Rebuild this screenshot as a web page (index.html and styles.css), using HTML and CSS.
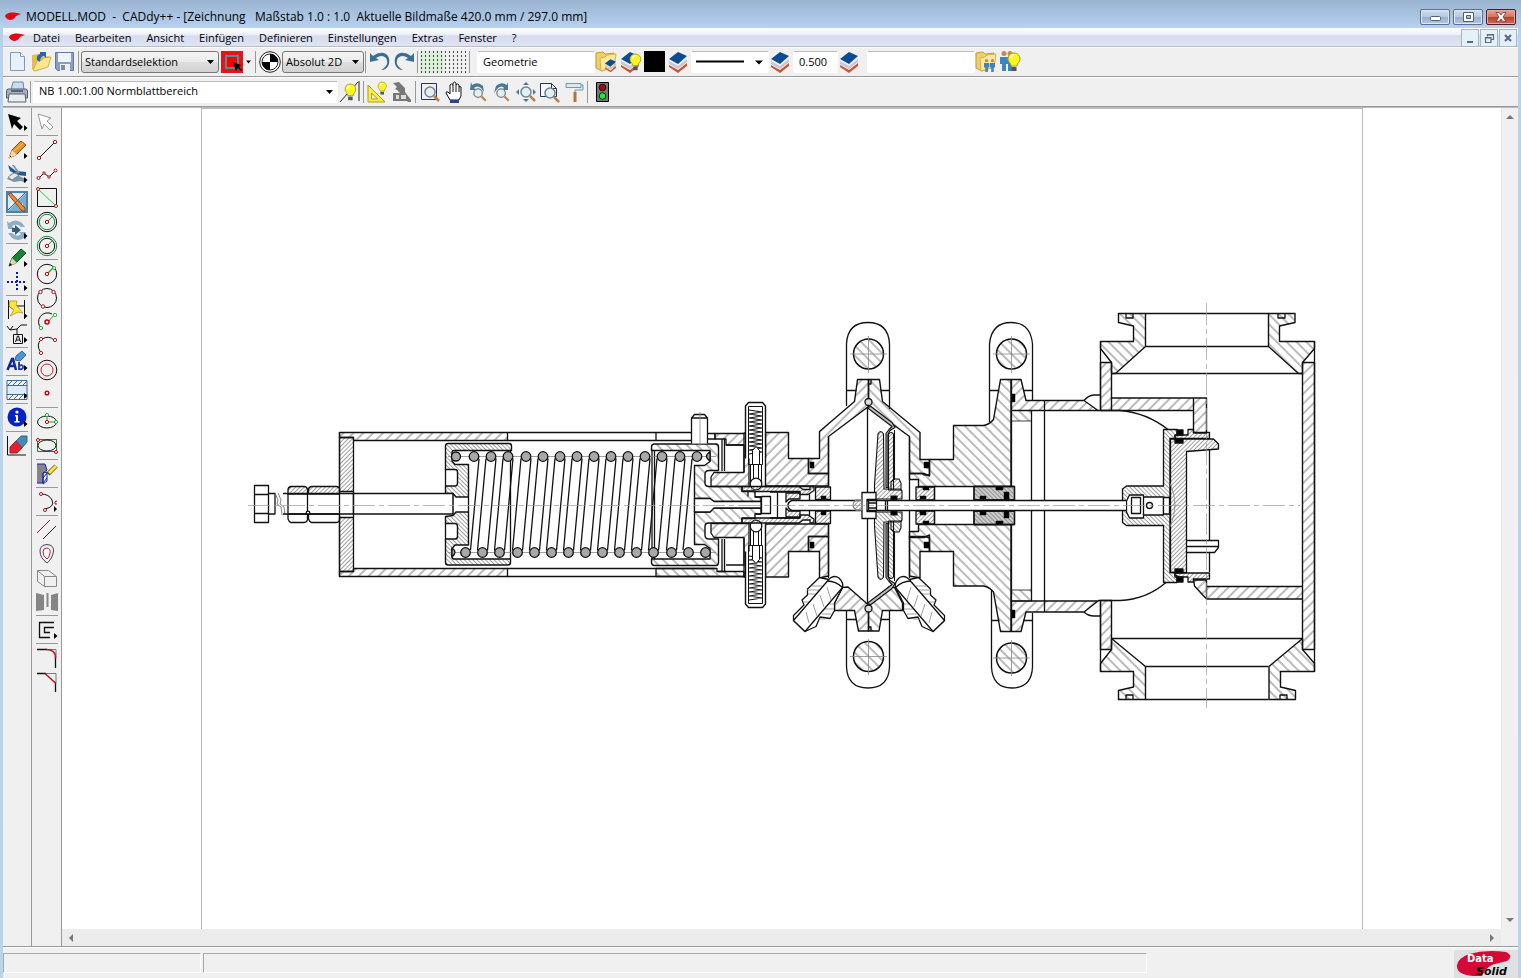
FILE: index.html
```html
<!DOCTYPE html>
<html lang="de">
<head>
<meta charset="utf-8">
<title>MODELL.MOD - CADdy++</title>
<link rel="stylesheet" href="styles.css">
</head>
<body>
<svg class="defs" aria-hidden="true">
  <defs>
    <path id="swoosh" d="M0 4Q1 1 6 0.500Q11 0 16 2Q13 3 11 4Q9 8 5 8Q1 7 0 4Z" fill="#e30613"/>
    <g id="layers"><path d="M3 15l9 5 9-7v3l-9 7-9-6z" fill="#cf5432"/><path d="M3 11l9 5 9-7v3l-9 7-9-5z" fill="#c3c9da"/><path d="M3 9l9-7 9 4-9 8z" fill="#0c4c92"/></g>
    <g id="bulb"><path d="M6 0C2 0 0 3 0 6c0 3 3 4 3 7h6c0-3 3-4 3-7 0-3-2-6-6-6z" fill="#fdf51e" stroke="#a59a24"/><path d="M3.500 14h5v4h-5z" fill="#555"/><path d="M3 5q1-3 3-3" fill="none" stroke="#fff" stroke-width="1.500"/></g>
    <g id="folder"><path d="M1 3l7-1 2 2 9-1v14l-12 4-6-3z" fill="#f0cf63" stroke="#c79a3d"/><path d="M5 8l5-1 2-2 9-1-2 13-13 4z" fill="#fbeaa0" stroke="#d8b14d"/></g>
    <g id="lens"><circle cx="6" cy="6" r="5" fill="#e4eef5" stroke="#738391" stroke-width="1.500"/><path d="M10 10l5 5" stroke="#b9814b" stroke-width="2.500"/></g>
    <g id="people"><circle cx="4" cy="2.500" r="2.500" fill="#c58a4a"/><path d="M0 6h8v7h-2v7h-4v-7h-2z" fill="#3a86bd"/></g>
    <path id="more" d="M19 15l3.500 3-3.500 3z" fill="#000"/>
    <path id="caret" d="M0 0h7l-3.500 4z" fill="#000"/>
  </defs>
</svg>
<div class="window">
  <header class="titlebar">
    <svg class="mark" viewBox="0 0 16 9"><use href="#swoosh"/></svg>
    <h1 class="caption">MODELL.MOD&nbsp; -&nbsp; CADdy++ - [Zeichnung&nbsp;&nbsp; Maßstab 1.0 : 1.0&nbsp; Aktuelle Bildmaße 420.0 mm / 297.0 mm]</h1>
    <div class="winbtns">
      <button class="winbtn" aria-label="Minimieren"><svg viewBox="0 0 28 14"><rect x="9.500" y="6.500" width="10" height="4" rx="1" fill="#fff" stroke="#55606e"/></svg></button>
      <button class="winbtn" aria-label="Maximieren"><svg viewBox="0 0 28 14"><path d="M9.500 2.500h10v9h-10zM12.500 5.500v3h4v-3z" fill="#fff" fill-rule="evenodd" stroke="#55606e"/></svg></button>
      <button class="winbtn close" aria-label="Schließen"><svg viewBox="0 0 28 14"><path d="M9 2.500h3l2 2.500 2-2.500h3l-3 4.500 3 4.500h-3l-2-2.500-2 2.500H9L12 7z" fill="#fff" stroke="#6d3536" stroke-width=".8"/></svg></button>
    </div>
  </header>
  <nav class="menubar">
    <svg class="mark" viewBox="0 0 16 9"><use href="#swoosh"/></svg>
    <button class="menu">Datei</button><button class="menu">Bearbeiten</button><button class="menu">Ansicht</button><button class="menu">Einfügen</button><button class="menu">Definieren</button><button class="menu">Einstellungen</button><button class="menu">Extras</button><button class="menu">Fenster</button><button class="menu">?</button>
    <div class="mdibtns">
      <button class="mdi" aria-label="Dokument minimieren"><svg viewBox="0 0 16 16"><path d="M5 12h6" stroke="#566b80" stroke-width="2"/></svg></button>
      <button class="mdi" aria-label="Dokument wiederherstellen"><svg viewBox="0 0 16 16"><path d="M6.500 6.500V4.500h6v5h-2.500M6.500 5h6M4.500 7.500H10v5H4.500zM4.500 8H10" fill="none" stroke="#566b80" stroke-width="1.200"/></svg></button>
      <button class="mdi" aria-label="Dokument schließen"><svg viewBox="0 0 16 16"><path d="M5 5l6 6M11 5l-6 6" stroke="#566b80" stroke-width="2.200"/></svg></button>
    </div>
  </nav>

  <div class="toolbar" role="toolbar" aria-label="Standard">
    <button class="tool" aria-label="Neu"><svg viewBox="0 0 24 24"><path d="M5.500 2.500h10l4 4v14h-14z" fill="#e7f1fc" stroke="#7d99c4"/><path d="M15.500 2.500v4h4" fill="#fff" stroke="#7d99c4"/></svg></button>
    <button class="tool" aria-label="Öffnen"><svg viewBox="0 0 24 24"><path d="M3 5l7-1 2 3 8-1v9l-12 6-5-2z" fill="#e9bd4a"/><path d="M4 20l4-9 5-1 1-2 8-1-3 10-13 4z" fill="#fce78e" stroke="#d7ae45"/><path d="M8 10Q7 5 11 4V2h6v6l-2-2q-4 0-4 6z" fill="#2f62ae"/></svg></button>
    <button class="tool" aria-label="Speichern"><svg viewBox="0 0 24 24"><path d="M2.500 2.500h18v18h-16l-2-2z" fill="#8b9dc3" stroke="#6078a8"/><path d="M5 3h13v9H5z" fill="#edf4fb"/><path d="M7 14h10v7H7z" fill="#eaf0f5"/><path d="M8 15h4v5H8z" fill="#7e8da8"/></svg></button>
    <span class="sep"></span>
    <span class="combo wide"><select class="field raised" aria-label="Selektion"><option>Standardselektion</option></select><svg class="caret" viewBox="0 0 7 4"><use href="#caret"/></svg></span>
    <button class="tool lead" aria-label="Auswahlfarbe"><svg viewBox="0 0 24 24"><path d="M1 1h22v22H1z" fill="#e5141a"/><path d="M6 6h12v12H6z" fill="#f00" stroke="#5b8a8d" stroke-width="2"/><path d="M13 12l8 3-2 2 3 3-1 1-3-3-2 3z" fill="#000"/></svg></button>
    <button class="drop" aria-label="Auswahlfarbe wählen"><svg viewBox="0 0 5 3"><path d="M0 0h5l-2.500 3z"/></svg></button>
    <span class="sep"></span>
    <button class="tool" aria-label="Koordinatensystem"><svg viewBox="0 0 24 24"><circle cx="12" cy="12" r="10.300" fill="#fff" stroke="#222"/><circle cx="12" cy="12" r="8" fill="#fff" stroke="#222"/><path d="M12 12V4a8 8 0 0 1 8 8zM12 12v8a8 8 0 0 1-8-8z"/></svg></button>
    <span class="combo coord"><select class="field raised" aria-label="Koordinaten"><option>Absolut 2D</option></select><svg class="caret" viewBox="0 0 7 4"><use href="#caret"/></svg></span>
    <span class="sep"></span>
    <button class="tool" aria-label="Rückgängig"><svg viewBox="0 0 24 24"><path d="M2 3v9l9-2-3-2q6-4 10 0 3 5-1 9-2 2-4 3 6 0 8-6 2-8-5-11-6-1-11 3z" fill="#3c6f96"/></svg></button>
    <button class="tool" aria-label="Wiederholen"><svg viewBox="0 0 24 24"><path d="M22 3v9l-9-2 3-2q-6-4-10 0-3 5 1 9 2 2 4 3-6 0-8-6-2-8 5-11 6-1 11 3z" fill="#3c6f96"/></svg></button>
    <span class="sep"></span>
    <button class="tool" aria-label="Raster grün"><svg viewBox="0 0 24 24"><path d="M0 1h24v22H0z" fill="#dcefd8"/><path d="M1 2h23M1 6h23M1 10h23M1 14h23M1 18h23M1 22h23" stroke="#111" stroke-dasharray="1 3" stroke-width="1.500"/></svg></button>
    <button class="tool" aria-label="Raster"><svg viewBox="0 0 24 24"><path d="M1 2h23M1 6h23M1 10h23M1 14h23M1 18h23M1 22h23" stroke="#111" stroke-dasharray="1 3" stroke-width="1.500"/></svg></button>
    <span class="sep"></span>
    <input class="field group" aria-label="Gruppe" value="Geometrie">
    <button class="tool" aria-label="Ebenen öffnen"><svg viewBox="0 0 24 24"><use href="#folder"/><g transform="translate(8 8) scale(.62)"><use href="#layers"/></g></svg></button>
    <button class="tool" aria-label="Ebenen sichtbar"><svg viewBox="0 0 24 24"><use href="#layers" x="-1"/><g transform="translate(11 4) scale(.9)"><use href="#bulb"/></g></svg></button>
    <button class="tool" aria-label="Farbe"><svg viewBox="0 0 24 24"><path d="M1 1h21v21H1z"/></svg></button>
    <button class="tool" aria-label="Farbe aus Ebene"><svg viewBox="0 0 24 24"><use href="#layers" x="-1"/></svg></button>
    <span class="combo linetype"><select class="field" aria-label="Linienart"><option></option></select><svg class="stroke" viewBox="0 0 78 21"><path d="M5 9.500h48" stroke="#000" stroke-width="2"/><path d="M64 8.500h8l-4 4z"/></svg></span>
    <button class="tool" aria-label="Linienart aus Ebene"><svg viewBox="0 0 24 24"><use href="#layers" x="-1"/></svg></button>
    <input class="field pen" aria-label="Strichstärke" value="0.500">
    <button class="tool" aria-label="Strichstärke aus Ebene"><svg viewBox="0 0 24 24"><use href="#layers" x="-1"/></svg></button>
    <input class="field klass" aria-label="Klasse" value="">
    <button class="tool" aria-label="Klasse öffnen"><svg viewBox="0 0 24 24"><use href="#folder"/><g transform="translate(9 9) scale(.65)"><use href="#people"/><use href="#people" x="9"/></g></svg></button>
    <button class="tool" aria-label="Klasse sichtbar"><svg viewBox="0 0 24 24"><use href="#people" x="1" y="1"/><use href="#people" x="7" y="1"/><use href="#bulb" x="9" y="3"/></svg></button>
  </div>

  <div class="toolbar" role="toolbar" aria-label="Ansicht">
    <button class="tool" aria-label="Drucken"><svg viewBox="0 0 24 24"><path d="M6 10l2-8h10l1 8z" fill="#c8dcf2" stroke="#6b87a7"/><path d="M1.500 11q0-2 2-2h17q2 0 2 2v7h-21z" fill="#a6b1bb" stroke="#4e5d6b"/><path d="M4 14h16l1 8H3z" fill="#e8edf1" stroke="#56636e"/><path d="M6 11h12" stroke="#53677a" stroke-width="2"/></svg></button>
    <span class="sep"></span>
    <span class="combo view"><select class="field" aria-label="Bildbereich"><option>NB 1.00:1.00 Normblattbereich</option></select><svg class="caret" viewBox="0 0 7 4"><use href="#caret"/></svg></span>
    <button class="tool" aria-label="Hilfslinien"><svg viewBox="0 0 24 24"><path d="M2 22L20 2M21 1v20" stroke="#222" fill="none"/><g transform="translate(7 4) scale(.9)"><use href="#bulb"/></g></svg></button>
    <span class="sep"></span>
    <button class="tool" aria-label="Messen"><svg viewBox="0 0 24 24"><path d="M2 5v17h17zM5.500 13v6h6z" fill="#fbee45" stroke="#aa9e1d" fill-rule="evenodd"/><g transform="translate(12 2) scale(.7)"><use href="#bulb"/></g></svg></button>
    <button class="tool" aria-label="Text messen"><svg viewBox="0 0 24 24"><path d="M3 3l6-1 6 6v4l6 8v2h-3l-1-1H3v-8h7l-3-3-2-1 2-2z" fill="#777"/><path d="M6 15h3v4H6zM11 15h5v4h-5z" fill="#ddd"/></svg></button>
    <span class="sep"></span>
    <button class="tool" aria-label="Ausschnitt"><svg viewBox="0 0 24 24"><path d="M3.500 3.500h15v16h-15z" fill="none" stroke="#26316b"/><use href="#lens" x="6" y="6"/></svg></button>
    <button class="tool" aria-label="Verschieben"><svg viewBox="0 0 24 24"><path d="M8 20l-4-7q0-2 2-1l2 2V5q1.500-2 3 0V3q1.500-2 3 0v2q1.500-2 3 0v2q1-1 2 0v9l-2 4z" fill="#fff" stroke="#111"/><path d="M11 5v7M14 5v7M17 7v5" stroke="#111"/><path d="M8 20h9v3H8z" fill="#28468c"/></svg></button>
    <button class="tool" aria-label="Zoom zurück"><svg viewBox="0 0 24 24"><path d="M5 2l1 3q6-4 11 1l1 6-3-4q-4-3-7 0l2 2-6 0z" fill="#4b7894"/><g transform="translate(7 8) scale(.85)"><use href="#lens"/></g></svg></button>
    <button class="tool" aria-label="Zoom vor"><svg viewBox="0 0 24 24"><path d="M18 2l-1 3Q11 1 6 6l-2 7 4-5q4-3 6 0l-2 2 6 0z" fill="#4b7894"/><g transform="translate(6 8) scale(.85)"><use href="#lens"/></g></svg></button>
    <button class="tool" aria-label="Alles zeigen"><svg viewBox="0 0 24 24"><path d="M12 2l3 3H9zM12 22l3-3H9zM2 12l3-3v6zM22 12l-3-3v6z" fill="#4b7894"/><use href="#lens" x="6" y="6"/></svg></button>
    <button class="tool" aria-label="Blatt zeigen"><svg viewBox="0 0 24 24"><path d="M2.500 3.500h11l5 5v8h-16zM13.500 3.500v5h5" fill="#f6f8fb" stroke="#26316b"/><use href="#lens" x="6" y="7"/></svg></button>
    <button class="tool" aria-label="Neu zeichnen"><svg viewBox="0 0 24 24"><path d="M4 3.500h15v4H4zM19 5h2v5h-8v3" fill="#dbe9ef" stroke="#7799a6"/><path d="M13 12v10" stroke="#aa7547" stroke-width="3"/></svg></button>
    <span class="sep"></span>
    <button class="tool" aria-label="Ampel"><svg viewBox="0 0 24 24"><path d="M6.500 2.500h12v19h-12z" fill="#777" stroke="#000"/><circle cx="12.500" cy="7.500" r="3.300" fill="#901118" stroke="#300"/><circle cx="12.500" cy="16" r="3.300" fill="#20ea3c" stroke="#030"/></svg></button>
  </div>

  <main class="work">
    <div class="palette" role="toolbar" aria-label="Funktionen">
      <button class="tool" aria-label="Auswählen"><svg viewBox="0 0 24 24"><path d="M3 4l13 4-4 3 6 6-3 3-6-6-2 5z"/><use href="#more"/></svg></button>
      <span class="rule"></span>
      <button class="tool" aria-label="Zeichnen"><svg viewBox="0 0 24 24"><path d="M4 20l3-8L16 3l5 4-10 10z" fill="#e8922e" stroke="#8a4b15"/><path d="M4 20l3-8 5 5z" fill="#f3dca8"/><path d="M4 20l1-3 2 2zM9 13L18 5" fill="#222" stroke="#f9c66c"/><use href="#more"/></svg></button>
      <button class="tool" aria-label="Bearbeiten"><svg viewBox="0 0 24 24"><path d="M3 3l8 6 10 1v4l-9-1-7-4z" fill="#235a91"/><path d="M7 3l5 7-6 2-4 5 7 3 7-1 5 2v-4l-7-3-2-3 3 0-6-8z" fill="#7697ac"/><path d="M3 15l6-4 5 2-7 5z" fill="#e6e9eb" stroke="#555" stroke-width=".5"/><use href="#more"/></svg></button>
      <span class="rule"></span>
      <button class="tool" aria-label="Konstruktion"><svg viewBox="0 0 24 24"><path d="M2 2h20v20H2z" fill="#deebf4" stroke="#4a82af" stroke-width="2"/><path d="M3 21L21 3v18zM13 18h5v-5z" fill="#7dabcc" fill-rule="evenodd"/><path d="M3 4l3-1 14 15v3h-3z" fill="#ed8a2e" stroke="#834617"/><path d="M3 20L20 3" stroke="#3e6583"/></svg></button>
      <span class="rule"></span>
      <button class="tool" aria-label="Transformieren"><svg viewBox="0 0 24 24"><path d="M2 3l2 2q7-5 13 0l3 4h-4q-4-4-9-1l3 3H3zM21 22l-2-2q-6 4-12 0l-4-5h4q5 5 9 1l-2-2h7z" fill="#8eadc7"/><path d="M10 7l6 5-6 5v-3H7v-4h3z" fill="#345f84"/><use href="#more"/></svg></button>
      <span class="rule"></span>
      <button class="tool" aria-label="Attribute"><svg viewBox="0 0 24 24"><path d="M4 20l3-8L16 3l5 4-10 10z" fill="#178334" stroke="#07591c"/><path d="M4 20l3-8 5 5z" fill="#e0d6ad"/><path d="M4 20l1-3 2 2z"/><use href="#more"/></svg></button>
      <button class="tool" aria-label="Punkte"><svg viewBox="0 0 24 24"><path d="M12 2v20M2 12h20" stroke="#0712c6" stroke-width="2" stroke-dasharray="2 2"/><use href="#more"/></svg></button>
      <span class="rule"></span>
      <button class="tool" aria-label="Bemaßung"><svg viewBox="0 0 24 24"><path d="M3.500 2v19M19.500 2v19M4 8h15M8 5l-4 3 4 3" fill="none" stroke="#111"/><path d="M5 3h7l-1 4 7 8-5-1-8 4 4-6-5-4z" fill="#ffe832" stroke="#a98a0d" stroke-width=".7"/><use href="#more"/></svg></button>
      <button class="tool" aria-label="Symbole"><svg viewBox="0 0 24 24"><path d="M2 4l3 4 3-4M5 8l7-1 4-4h6M12 7v5M8.500 12.500h9v9h-9zM10.500 20l2-6h1l2 6M11 18h4" fill="none" stroke="#111"/><use href="#more"/></svg></button>
      <span class="rule"></span>
      <button class="tool" aria-label="Text"><svg viewBox="0 0 24 24"><path d="M2.500 20l4.500-11h1l3 11M4 16h6" fill="none" stroke="#13299a" stroke-width="2.500"/><path d="M14 12v8M14 16q4-2 4 1 0 3-4 2" fill="none" stroke="#1b38af" stroke-width="1.800"/><path d="M10 10l1-4 6-5 4 4-6 6z" fill="#4695d4" stroke="#376b9c"/><use href="#more"/></svg></button>
      <span class="rule"></span>
      <button class="tool" aria-label="Schraffur"><svg viewBox="0 0 24 24"><path d="M3 7l5-5M8 7l5-5M13 7l5-5M18 7l4-4M3 22l5-5M8 22l5-5M13 22l5-5M2 2.500h20v5H2zM2 16.500h20v5H2zM2 7v10M22 7v10" fill="none" stroke="#466b91"/><path d="M3 8h18v8H3z" fill="#dcecf8"/><use href="#more"/></svg></button>
      <span class="rule"></span>
      <button class="tool" aria-label="Information"><svg viewBox="0 0 24 24"><circle cx="12" cy="11" r="9.500" fill="#0722c2"/><circle cx="12" cy="6" r="1.600" fill="#fff"/><path d="M10 9h3v6h1.500v1.500h-5V15H11v-4.500h-1z" fill="#fff"/><use href="#more"/></svg></button>
      <span class="rule"></span>
      <button class="tool" aria-label="Löschen"><svg viewBox="0 0 24 24"><path d="M2.500 2v19H21" fill="none" stroke="#111"/><path d="M11 7l5-5h6v6l-5 6z" fill="#4489b8" stroke="#31698e"/><path d="M5 13l6-6 6 7-5 5H5z" fill="#e7212b" stroke="#9d252c"/></svg></button>
    </div>
    <div class="palette" role="toolbar" aria-label="Geometrie">
      <button class="tool" aria-label="Objekt wählen"><svg viewBox="0 0 24 24"><path d="M3 4l13 4-4 3 6 6-3 3-6-6-2 5z" fill="#fff" stroke="#999"/></svg></button>
      <span class="rule"></span>
      <button class="tool" aria-label="Linie"><svg viewBox="0 0 24 24"><path d="M5 19L19 5" stroke="#111"/><g fill="#fff" stroke="#a9121b"><circle cx="4" cy="20" r="1.700"/><circle cx="20" cy="4" r="1.700"/></g></svg></button>
      <button class="tool" aria-label="Polylinie"><svg viewBox="0 0 24 24"><path d="M4 16l5-5 5 4 6-6" fill="none" stroke="#111"/><g fill="#fff" stroke="#a9121b"><circle cx="3.500" cy="16" r="1.500"/><circle cx="9" cy="11" r="1.200"/><circle cx="14" cy="15" r="1.200"/><circle cx="20.500" cy="8.500" r="1.500"/></g></svg></button>
      <button class="tool" aria-label="Rechteck"><svg viewBox="0 0 24 24"><path d="M2.500 2.500h19v18h-19z" fill="none" stroke="#111"/><path d="M3 3l18 17" stroke="#27d528"/><g fill="#fff" stroke="#a9121b"><circle cx="3" cy="3" r="1.500"/><circle cx="21" cy="20" r="1.500"/></g></svg></button>
      <button class="tool" aria-label="Kreis Radius"><svg viewBox="0 0 24 24"><g fill="none" stroke="#111"><circle cx="12" cy="12" r="9.700"/><circle cx="12" cy="12" r="7.700" stroke="#168a32"/><path d="M13 11l5-5" stroke="#168a32"/></g><circle cx="12" cy="12" r="1.700" fill="#fff" stroke="#b00"/></svg></button>
      <button class="tool" aria-label="Kreis Durchmesser"><svg viewBox="0 0 24 24"><g fill="none" stroke="#111"><circle cx="12" cy="12" r="9.700" stroke="#168a32"/><circle cx="12" cy="12" r="7.700"/><path d="M13 11l5-5" stroke="#168a32"/></g><circle cx="12" cy="12" r="1.700" fill="#fff" stroke="#b00"/></svg></button>
      <span class="rule"></span>
      <button class="tool" aria-label="Kreis Punkt"><svg viewBox="0 0 24 24"><circle cx="12" cy="12" r="9.700" fill="none" stroke="#111"/><path d="M13 11l6-6" stroke="#22b42c" stroke-width="1.500"/><circle cx="19" cy="6" r="1.500" fill="#fff" stroke="#22b42c"/><circle cx="12" cy="12" r="1.700" fill="#fff" stroke="#b00"/></svg></button>
      <button class="tool" aria-label="Kreis 3 Punkte"><svg viewBox="0 0 24 24"><circle cx="12" cy="12" r="9.500" fill="none" stroke="#111"/><g fill="#fff" stroke="#a9121b"><circle cx="5.500" cy="6" r="1.700"/><circle cx="18.500" cy="6" r="1.700"/><circle cx="8" cy="20.500" r="1.700"/></g></svg></button>
      <button class="tool" aria-label="Bogen Mitte"><svg viewBox="0 0 24 24"><path d="M6 18A9 9 0 0 1 17 4" fill="none" stroke="#111"/><path d="M13 12l6-7" stroke="#18a333"/><g fill="#fff" stroke="#20bb38"><circle cx="20" cy="5" r="1.700"/><circle cx="6" cy="18" r="1.700"/></g><circle cx="12" cy="12" r="2" fill="#fff" stroke="#c00" stroke-width="1.500"/></svg></button>
      <button class="tool" aria-label="Bogen 3 Punkte"><svg viewBox="0 0 24 24"><path d="M6 19Q0 10 7 5q7-4 12 1" fill="none" stroke="#111"/><g fill="#fff" stroke="#a9121b"><circle cx="6" cy="19" r="1.600"/><circle cx="6" cy="5" r="1.600"/><circle cx="20" cy="6" r="1.600"/></g></svg></button>
      <button class="tool" aria-label="Kreisring"><svg viewBox="0 0 24 24"><circle cx="12" cy="12" r="9.800" fill="none" stroke="#111"/><circle cx="12" cy="12" r="6" fill="none" stroke="#d31b28"/></svg></button>
      <button class="tool" aria-label="Punkt"><svg viewBox="0 0 24 24"><circle cx="12" cy="11" r="1.800" fill="#fff" stroke="#b90d16" stroke-width="1.500"/></svg></button>
      <span class="rule"></span>
      <button class="tool" aria-label="Ellipse"><svg viewBox="0 0 24 24"><ellipse cx="12" cy="12" rx="9.500" ry="6" fill="none" stroke="#111"/><path d="M12 12V6M12 12h9" stroke="#23aa2b"/><circle cx="12" cy="5" r="1.600" fill="#fff" stroke="#23aa2b"/><circle cx="21" cy="12" r="1.600" fill="#fff" stroke="#23aa2b"/><circle cx="12" cy="12" r="1.600" fill="#fff" stroke="#b00"/></svg></button>
      <button class="tool" aria-label="Ellipse im Rechteck"><svg viewBox="0 0 24 24"><path d="M2.500 5.500h19v12h-19z" fill="none" stroke="#138b26"/><ellipse cx="12" cy="11.500" rx="9" ry="5.500" fill="none" stroke="#111"/><circle cx="3" cy="6" r="1.500" fill="#fff" stroke="#b00"/><circle cx="21" cy="18" r="1.500" fill="#fff" stroke="#b00"/></svg></button>
      <span class="rule"></span>
      <button class="tool" aria-label="Kontur"><svg viewBox="0 0 24 24"><path d="M2 2h8l2 6-4 3v10H2z" fill="#858585"/><path d="M2 2h8l2 6-4 3v10H2M8 11l4-1v9l-4 3zM8 16l4-5M8 21l4-5" fill="none" stroke="#1525b0"/><path d="M13 12l8-8" stroke="#4e5017" stroke-width="4.500"/><path d="M14 11l7-7" stroke="#ffe534" stroke-width="3"/></svg></button>
      <span class="rule"></span>
      <button class="tool" aria-label="Spline"><svg viewBox="0 0 24 24"><path d="M6 4q8 0 11 6 3 7-7 9" fill="none" stroke="#111"/><g fill="#fff" stroke="#a9121b"><circle cx="6" cy="4" r="1.500"/><circle cx="10" cy="20" r="1.500"/><path d="M22 11q-3 0-2 3h2" fill="none"/></g><path d="M19 16l3 3-3 3z"/></svg></button>
      <span class="rule"></span>
      <button class="tool" aria-label="Parallele"><svg viewBox="0 0 24 24"><path d="M2 15L15 2" stroke="#a31f26"/><path d="M8 21L21 8" stroke="#222"/></svg></button>
      <button class="tool" aria-label="Äquidistante"><svg viewBox="0 0 24 24"><path d="M12 2.500Q19 3 18.500 9q-1 8-6.500 12Q5 16 5 9q0-6 7-6.500z" fill="none" stroke="#445"/><path d="M12 6q4 1 3 5-1 5-3 6-4-3-4-7 0-4 4-4z" fill="#fff" stroke="#c6202d"/></svg></button>
      <button class="tool" aria-label="Quader"><svg viewBox="0 0 24 24"><path d="M2.500 4.500h11l8 6v10h-12l-7-5zM2.500 4.500l7 6v10M9.500 10.500h12" fill="none" stroke="#888"/></svg></button>
      <button class="tool" aria-label="Spiegeln"><svg viewBox="0 0 24 24"><path d="M1 3l8 2v15l-8 1zM11.500 3h2v14h-2zM23 3l-7 2v15l7 1z" fill="#858585"/></svg></button>
      <span class="rule"></span>
      <button class="tool" aria-label="Kammer"><svg viewBox="0 0 24 24"><path d="M19 4.500H4.500v15H15M19 9.500H9.500v5H15" fill="none" stroke="#111" stroke-width="1.300"/><use href="#more"/></svg></button>
      <span class="rule"></span>
      <button class="tool" aria-label="Verrunden"><svg viewBox="0 0 24 24"><path d="M2 3.500h10M20.500 11v11" stroke="#111" stroke-width="1.300"/><path d="M12 3.500h9v8" fill="none" stroke="#777"/><path d="M11 3.500q10 0 9.500 9" fill="none" stroke="#b41620" stroke-width="1.500"/></svg></button>
      <button class="tool" aria-label="Fasen"><svg viewBox="0 0 24 24"><path d="M2 3.500h9M20.500 12v10" stroke="#111" stroke-width="1.300"/><path d="M11 3.500h10v9" fill="none" stroke="#777"/><path d="M10 3.500l11 10" stroke="#b41620" stroke-width="1.500"/></svg></button>
    </div>

    <div class="viewport">
      <div class="canvas">
        <div class="paper">
          <svg class="drawing" viewBox="202 109 1160 820" preserveAspectRatio="xMidYMin meet" role="img" aria-label="Ventil im Schnitt">
            <defs>
              <pattern id="hr" width="7" height="7" patternUnits="userSpaceOnUse" patternTransform="rotate(45)"><path d="M3 0v7" stroke="#555" stroke-width=".8"/></pattern>
              <pattern id="hl" width="7" height="7" patternUnits="userSpaceOnUse" patternTransform="rotate(-45)"><path d="M3 0v7" stroke="#555" stroke-width=".8"/></pattern>
              <pattern id="fr" width="3" height="3" patternUnits="userSpaceOnUse" patternTransform="rotate(45)"><path d="M1.500 0v3" stroke="#777" stroke-width=".7"/></pattern>
              <pattern id="fl" width="3" height="3" patternUnits="userSpaceOnUse" patternTransform="rotate(-45)"><path d="M1.500 0v3" stroke="#777" stroke-width=".7"/></pattern>
              <g id="coil"><path d="M-5 2L-13.500 94M5 2L-3.500 94"/><circle r="4.800" fill="#a8a8a8"/><circle cx="-8.500" cy="96" r="4.800" fill="#a8a8a8"/></g>
              <g id="plunger">
                <path d="M745.500 458.500V406l3-3.500h14l3 3.500v52.500" fill="#fff" stroke-width="1.400"/>
                <path d="M748.500 406.500h14v58h-14z" fill="none" stroke-width="1"/>
                <path d="M749 410l13 2-13 2 13 2-13 2 13 2-13 2 13 2-13 2 13 2-13 2 13 2-13 2 13 2-13 2 13 2-13 2 13 2-13 2 13 2-13 2 13 2-13 2" fill="none" stroke-width="1.100"/>
                <path d="M752.500 464.500v-14l3.500-4 3.500 4v14zM750.500 464.500h11v20h-11zM753.500 465v14M758.500 465v14" fill="#fff" stroke-width="1"/>
                <circle cx="756" cy="484" r="5.800" fill="#fff"/>
              </g>
              <g id="nipple">
                <path d="M819.500 577.500L807.500 589v6l-5.500 5 2 5-10.500 10.500v5L805 631.500l11-5 4-9.500 10 1.500 4.500-8V603l8-15.500-14-8z" fill="#fff"/>
                <path d="M803 602h7M808 594h8M807 590h12M811 586h11M818 619h7M822 614h9M825 609h9M828 604h6" stroke="#888" stroke-width=".8"/>
                <path d="M827.500 581Q833 574 839 578q5 5 3.500 9.500L805 631.500 793.500 620.500z" fill="#fff"/><path d="M827.500 581q8 0 15 6.500" fill="none"/>
                <path d="M806 612l3 11M813 604l4 12M820 595l4 12M827 587l4 13" stroke="#888" stroke-width=".8"/>
              </g>
              <g id="membrane" stroke-width="1.100">
                <path d="M867 407.500l4-1 21 16 3 5-5 3-2 4v53h-2v-54l3-4 3-3z" fill="#bbb"/>
                <path d="M874.500 499v-14l3.500-51q2.500-5 5.500 0l.5 55h16l2 2v8z" fill="url(#fr)"/>
                <path d="M888.500 434q3-3 5 0v56h-5zM891 490v-8l3-3h5l2 4v7z" fill="url(#fr)"/>
                <path d="M894.500 430v50" fill="none"/>
                <path d="M891 496h6v3.500h-6z" fill="#000"/>
              </g>
            </defs>
            <g fill="none" stroke="#111" stroke-width="1.300" stroke-linejoin="round">
              <!-- spindle and nuts -->
              <path d="M254.500 485.500h14v37h-14zM254.500 494.500h14M254.500 513.500h14M268.500 493.500h6.500v20.500h-6.500"/>
              <path d="M275 493l3 7-1 4 4 3 1 8M278 493l3 7-1 4 4 3 1 8" stroke="#666" stroke-width=".8"/>
              <path d="M288 494v-4q0-3 3-3.500h13q3 0 3.500 3V494zM308.500 494v-4q0-3 3-3.500h25q2 0 3 2V494z" fill="url(#fr)"/>
              <path d="M288 514v5q1 3 3 3.500h13q3 0 3.500-3V514zM308.500 514v5q1 3 3 3.500h25q2 0 3-2V514zM288 494v20M307.500 494v20"/>
              <circle cx="308" cy="513" r="1.800" fill="#fff"/>
              <path d="M283 493.500h56M283 514h56"/>
              <!-- spring housing -->
              <path d="M339.500 437.500h14v54h-14zM339.500 517.500h14v54h-14z" fill="url(#fr)"/>
              <path d="M339.500 432.500h168v8h-154v-3h-14zM339.500 576.500h168v-8h-154v3h-14z" fill="url(#hr)"/>
              <path d="M507.500 432.500h184M507.500 440.500h184M656 432.500v8M507.500 568.500h208M507.500 576.500h238M339.500 432v145M353.500 491.500v26"/>
              <path d="M656 568.500h61v3h27v5h-88z" fill="url(#hl)"/>
              <!-- spring cups -->
              <path d="M445.500 493.500V486H455q2.500 0 2.500-3v-11q0-2.500-2.500-2.500h-9.500V446q0-2.500 2.500-2.500h61q2.500 0 2.500 2.500v4.500H454q-2 0-2 2.500v8l3 3.500h13.500V497H456l-3-3.500zM445.500 516.500v7H455q2.500 0 2.500 3v10q0 2.500-2.500 2.500h-9.500v23.500q0 2.500 2.500 2.500h60q2.500 0 2.500-2.500V559H454q-2 0-2-2.500v-8l3-3.500h13.500v-33H456l-3 3.500z" fill="url(#fl)" stroke-width="1.400"/>
              <path d="M445.500 469v17M445.500 523v17M510.500 451v108M468.500 497v15"/>
              <path d="M651.500 450.500V447q0-3 3-3H716q2.500 0 2.500 3v23.500H709q-4 0-4 4v8.500q0 3.500 4 3.500h33v4.500h13v6h6v4.500h-48l-3-3h-15.500v-33h10l5.500-4v-11zM651.500 559v3.500q0 3 3 3H716q2.500 0 2.500-3V539H709q-4 0-4-4v-8.500q0-3.500 4-3.500h33v-4.500h13v-4.500h6v-6h-48l-3 4h-15.500v32.500h10l5.500 4V559z" fill="url(#hl)" stroke-width="1.400"/>
              <path d="M694.500 499v13M652 450v109M654.500 450v109"/>
              <!-- main spring -->
              <path d="M448 456.500h268M448 552.500h268" stroke="#888" stroke-width=".8"/>
              <g>
                <path d="M479 459l-8.500 91"/><circle cx="474" cy="456.500" r="4.800" fill="#a8a8a8"/><circle cx="465.500" cy="552.500" r="4.800" fill="#a8a8a8"/>
                <use href="#coil" x="491" y="456.500"/><use href="#coil" x="508" y="456.500"/><use href="#coil" x="526" y="456.500"/><use href="#coil" x="543" y="456.500"/><use href="#coil" x="560" y="456.500"/><use href="#coil" x="577" y="456.500"/><use href="#coil" x="594" y="456.500"/><use href="#coil" x="611" y="456.500"/><use href="#coil" x="628" y="456.500"/><use href="#coil" x="645" y="456.500"/><use href="#coil" x="662" y="456.500"/><use href="#coil" x="680" y="456.500"/>
                <path d="M692 459l-9 91"/><circle cx="697" cy="456.500" r="4.800" fill="#a8a8a8"/><circle cx="688.500" cy="552.500" r="4.800" fill="#a8a8a8"/>
                <circle cx="456" cy="456.500" r="4.500" fill="#a8a8a8"/><path d="M452 548q6 4 0 9zM710 452q-7 4 0 9z" fill="#a8a8a8"/><circle cx="705.500" cy="552.500" r="4.800" fill="#a8a8a8"/>
              </g>
              <path d="M691.500 443.500V418l3-3.500h10l3 3.500v25.500M691.500 418h16" fill="#fff"/><path d="M700 412v34" stroke="#888" stroke-width=".8"/>
              <!-- detent hub -->
              <path d="M708 433.500h7V439h-7M726 445h18v27M722 439v32M724.500 439v32M722 539v32M724.500 539v32M726 565h18v-27M718 571.500h8"/>
              <path d="M715 433.500h29v11.500h-18v-6h-11zM711 477l3-4.500h30V433h5v53.500h-38zM711 533l3 4.500h30V577h5v-53.500h-38z" fill="url(#hr)"/>
              <path d="M765.500 432.500h23v26h20v15h20V486h-63zM765.500 577h23v-25.500h20v-15h20V524h-63z" fill="url(#hr)" stroke-width="1.400"/>
              <use href="#plunger"/><use href="#plunger" transform="matrix(1 0 0 -1 0 1010)"/>
              <path d="M742 486.500h57l4 3h7v-3h4v4l-6 4h-8v-3h-58zM742 523h57l4-3h7v3h4v-4l-6-4h-8v3h-58z" fill="url(#fr)"/>
              <path d="M762 486.500h52M761.500 496.500h9v17h-9zM755 497h6M755 514h6M748 491.500v5M777.500 492v26M770 492h30M770 518h30M809.500 494v22"/>
              <path d="M786 493h14v6h-11l-3 3zM786 517h14v-6h-11l-3-3zM815.500 487h15v12.500h-15zM815.500 511h15v12.500h-15z" fill="url(#fr)"/>
              <!-- clamp bolts -->
              <path d="M846.500 406V344q1-21.500 21.500-21.500t21.500 21.500v65M846.500 390.500h10M880.500 390.500h9M846.500 611v56q1 21 21.500 21t21.500-21v-56M846.500 619.500h10M880.500 619.500h9M989.500 422v-78q2-21.500 21.500-21.500T1032.500 344v56M989.500 390.500h9M1023.500 390.500h9M991.500 590v77q1 21 20.500 21t20.500-21v-54M991.500 620.500h8M1023.500 620.500h9"/>
              <g fill="url(#hl)" stroke-width="1.500"><circle cx="868.500" cy="354" r="15"/><circle cx="868.500" cy="656.500" r="15"/><circle cx="1011.500" cy="354" r="15"/><circle cx="1011.500" cy="658" r="15"/></g>
              <path d="M850 354h37M868.500 336v37M850 656.500h37M868.500 639v36M993 354h37M1011.500 336v37M993 658h37M1011.500 640v36" stroke="#888" stroke-width=".8"/>
              <!-- membrane chamber -->
              <path d="M868.500 379.500h-11l-3 22-35 30v27h-11v15h20v-37l40-30z" fill="url(#hr)" stroke-width="1.400"/>
              <path d="M868.500 379.500h11l3 22 37.500 31v27h9.500V475H924l-2-1.500h-12.500v-37l-41-30zM868.500 605l20.500-18 5.500.5 8 15.500v7.500h-20L879 631h-10.500z" fill="url(#hl)" stroke-width="1.400"/>
              <path d="M868.500 605L848 587l-5.500.5-8 15.500v7.500h20l4 20.500h10zM808.500 536.500h20V576l-9 2v-26.500h-11z" fill="url(#hr)" stroke-width="1.400"/>
              <path d="M929.500 551.500H920V578l-10.500-2v-39.500H924l5.500 1z" fill="url(#hl)" stroke-width="1.400"/>
              <path d="M828.500 436v50M828.500 524v54M867.500 407v197M909.500 437v141"/>
              <path d="M871 380v4h-2.500M871 631v-4h-2.500"/>
              <use href="#nipple"/><use href="#nipple" transform="matrix(-1 0 0 1 1738 0)"/>
              <use href="#membrane"/><use href="#membrane" transform="matrix(1 0 0 -1 0 1011)"/>
              <circle cx="868.500" cy="402" r="3.500" fill="#ddd"/><circle cx="868.500" cy="608.500" r="3.500" fill="#ddd"/>
              <!-- intermediate flange -->
              <path d="M953.500 425.500h30q6-1 10-6l7-40h10.500v107h-92.500v-7h-9v-6h14.500l5.500 2.500v-16.500h24z" fill="url(#hl)" stroke-width="1.400"/>
              <path d="M953.500 586h30q6 1 10 6l7 39.500h10.500v-107h-92.500v7h-9v6h14.500l5.500-2.500v16.500h24z" fill="url(#hl)" stroke-width="1.400"/>
              <path d="M1011.500 410.500h20V421h-20zM1011.500 590h20v11h-20z" fill="url(#hl)" stroke-width=".8"/>
              <path d="M1011.500 379.500h9.500l5 21h58l14 10h-86.500zM1011.500 631.500h9.500l5-19.500h58l14-11h-86.500z" fill="url(#hr)" stroke-width="1.400"/>
              <path d="M1084 400.500q4-5 10-5.500h6.500M1084 612q4 4 10 4h6.500M1011.500 410v191M1031.500 410v191M1044.500 400v212"/>
              <path d="M916 487h18.500v13H916zM916 511h18.500v13H916z" fill="url(#fr)"/>
              <path d="M974 486.500h40.500V500H974zM974 511h40.500v13.500H974z" fill="#ccc"/><path d="M974 486.500h40.500V500H974zM974 511h40.500v13.500H974z" fill="url(#fl)"/>
              <path d="M934.500 487v37"/>
              <path d="M810 462h4v6h-4zM924 462h5v6h-5zM810 542h4v6h-4zM924 542h5v6h-5zM1012 394h3v8h-3zM1012 610h3v8h-3zM821 496h5v3h-5zM821 511h5v4h-5zM923 487h6v3h-6zM920 496h6v3h-6zM920 511h6v4h-6zM923 521h6v3h-6zM996 487h7v3h-7zM1004 492h5v8h-5zM980 496h6v3h-6zM980 511h6v4h-6zM1004 511h5v7h-5zM996 521h7v3h-7z" fill="#000" stroke-width=".5"/>
              <!-- cross body -->
              <path d="M1118.500 313.500h27v33l-30 27h-4v-11l-11-14v-7h33V326l-15-3.500zM1295 313.500h-26.500v33l30 27h4v-11l12-14v-7h-35V326l15.500-3.500zM1118.500 699.500h27v-33l-34-28v11l-11 14v8h33V687l-15 3.500zM1295.500 699.500H1269v-33l33.500-28v11l12 14v8h-34V687l15 3.500z" fill="url(#hl)" stroke-width="1.400"/>
              <path d="M1100.500 362.500h11v48h-11zM1100.500 600.500h11v49h-11zM1302.500 362.500h12v287h-12zM1111.500 398h82v12.500h-82zM1193.500 398h13v35h-13zM1206.500 586.500h96v12.500h-96zM1193.500 580h13v19l-12-13z" fill="url(#hr)" stroke-width="1.400"/>
              <path d="M1145.500 313.500h123M1145.500 346.500h123M1111.500 373.500h191M1145.500 699.500h123M1145.500 666.500h123M1111.500 638.500h191M1100.500 341.500v69M1100.500 600.500v71M1314.500 341.500v330"/>
              <path d="M1126 314v4h7v-4M1278 314v4h7v-4M1126 699v-4h7v4M1280 699v-4h7v4M1098 410.500h22q26 2 48 19M1098 600.500h22q26-1 46-18"/>
              <!-- valve disc -->
              <path d="M1163.500 429.500H1177v6h-2v3h-5v134h5v3h2v7h-13.500v-57h-37l-4-3V489l4-3h37zM1163.500 515v-18h-20v-2h-14l-3 6v11l3 6h14v-3z" fill="url(#fl)" fill-rule="evenodd"/>
              <path d="M1170.500 439h43l5 5v5l-32 2.500v121h-16zM1188 429.500h5.500v3h16v6H1175V435h13zM1188 582h5.500v-3h16v-6H1175v4h13z" fill="url(#fr)"/>
              <path d="M1209.500 449v92M1209.500 552v20M1186.500 540.500h32v7l-4 5h-28M1186.500 546.500h32M1131.500 497.500h9v16h-9zM1143.500 496.500v18.500"/>
              <path d="M1163.500 497.500h6V514h-6z" fill="#fff"/>
              <path d="M1170 483q10 22 0 44" stroke="#888" stroke-width=".8"/>
              <circle cx="1149.500" cy="505.500" r="3"/>
              <path d="M1177 430h6v5h-6zM1175 439h8v4h-8zM1175 569h8v4h-8zM1177 577h6v5h-6z" fill="#000"/>
              <!-- rod -->
              <path d="M353.500 493.500H453V514h-99.500zM339.500 493.500h14M339.500 514h14" fill="#fff" stroke-width="1.500"/>
              <path d="M694.500 498.500h15.500l4 3h47v6.500h-47l-4 4h-15.500z" fill="#fff"/>
              <path d="M1126 500.500H792q-4 1.500-4 5t4 5h334" fill="#fff" stroke-width="1.400"/>
              <path d="M862 492.500h14v7h-9v12h9v7h-14z" fill="#fff"/><path d="M868.500 500h8v11h-8zM868.500 503h8M868.500 508h8M885.500 500v11M887.500 500v11"/>
              <path d="M862 500h-6q-6 5 0 10h6z" fill="url(#fr)" stroke="#888"/>
              <path d="M248 505.500H1300M1206.500 303v405" stroke="#999" stroke-width=".7" stroke-dasharray="22 4 5 4"/>
            </g>
          </svg>
        </div>
      </div>
      <div class="vscroll"><svg viewBox="0 0 8 4"><path d="M0 4l4-4 4 4z" fill="#777"/></svg><svg viewBox="0 0 8 4"><path d="M0 0l4 4 4-4z" fill="#777"/></svg></div>
      <div class="hscroll"><svg viewBox="0 0 4 8"><path d="M4 0L0 4l4 4z" fill="#777"/></svg><svg viewBox="0 0 4 8"><path d="M0 0l4 4-4 4z" fill="#777"/></svg></div>
      <div class="corner"></div>
    </div>
  </main>

  <footer class="status">
    <span class="cell"></span><span class="cell"></span><span></span>
    <svg class="logo" viewBox="0 0 64 28" role="img" aria-label="Data Solid"><path d="M0 0h64v28H0z" fill="#e0e0e2"/><path d="M3 17Q2 9 15 4Q32-1 52 2Q60 6 53 11L45 13Q32 15 28 26Q4 27 3 17Z" fill="#d50935"/><text class="logo-a" x="13" y="12">Data</text><text class="logo-b" x="22" y="25">Solid</text></svg>
  </footer>
</div>
</body>
</html>
```
FILE: styles.css
```css
* { box-sizing: border-box; }
body { margin: 0; font: 11px/16px "Open Sans", "Noto Sans", sans-serif; color: #000; }
.defs { display: block; width: 0; height: 0; }
button { margin: 0; padding: 0; border: 0; background: none; font: inherit; color: inherit; }
button svg { display: block; width: 100%; height: 100%; }

.window { display: flex; flex-direction: column; height: 100vh; padding: 0 3px; background: linear-gradient(#99b3d1, #b7d2ee 28px, #bcd3ec); }
.mark { width: 16px; height: 9px; flex: none; }

.titlebar { display: flex; align-items: center; height: 28px; padding: 5px 2px 0; gap: 5px; }
.caption { flex: 1; margin: 0; font-size: 12px; font-weight: 400; white-space: nowrap; }
.winbtns { display: flex; gap: 3px; }
.winbtn { width: 30px; height: 16px; border: 1px solid #596f8b; border-radius: 2px; background: linear-gradient(#d0deed, #b5c9df 48%, #96b0cd 50%, #b1c8e1); box-shadow: inset 0 0 0 1px #dce8f4; }
.winbtn.close { border-color: #551b20; background: linear-gradient(#e3a699, #d17664 48%, #b93e2a 50%, #cf6a50); box-shadow: inset 0 0 0 1px #e4aaa0; }

.menubar { display: flex; align-items: center; gap: 1px; height: 19px; padding: 1px 0 0 6px; background: linear-gradient(#fff, #eef0f8 35%, #d7dced 45%, #e0e5f5); border-bottom: 1px solid #b6bccc; }
.menu { padding: 0 7px; white-space: nowrap; }
.mdibtns { display: flex; gap: 1px; margin-left: auto; padding-right: 1px; }
.mdi { width: 18px; height: 18px; border: 1px solid #a5b7c7; background: #e6f0f8; }

.toolbar { display: flex; align-items: center; height: 30px; padding-left: 2px; background: #f0f0f0; border-top: 1px solid #fff; border-bottom: 1px solid #999; }
.tool { width: 24px; height: 24px; flex: none; }
.tool.lead { margin-left: 1px; }
.drop { width: 10px; height: 24px; padding: 10px 3px 10px 2px; }
.sep { width: 1px; height: 22px; margin: 0 2px 0 1px; background: #999; flex: none; }
.field { width: 100%; height: 22px; padding: 0 5px 2px; border: 1px solid #fff; border-top-color: #bbb; border-radius: 2px; background: #fff; font: inherit; color: inherit; appearance: none; }
.field.raised { padding: 0 3px; border: 1px solid #777; border-radius: 3px; background: linear-gradient(#f4f4f4, #ebebeb 48%, #dedede 50%, #d2d2d2); }
.combo { display: grid; align-items: center; flex: none; }
.combo > * { grid-area: 1 / 1; }
.caret { width: 7px; height: 4px; margin-right: 5px; justify-self: end; pointer-events: none; }
.stroke { width: 78px; height: 21px; pointer-events: none; }
.wide { width: 138px; }
.coord { width: 82px; }
.linetype { width: 78px; }
.view { width: 305px; }
.group { width: 118px; margin-left: 5px; }
.pen { width: 45px; }
.klass { width: 108px; margin-left: 5px; }

.work { flex: 1; min-height: 0; display: flex; background: #f0f0f0; border-top: 1px solid #bbb; border-bottom: 1px solid #999; }
.palette { width: 30px; flex: none; display: flex; flex-direction: column; align-items: center; padding: 2px 0 0 1px; border-right: 1px solid #999; }
.palette:first-child { width: 29px; padding-left: 0; }
.rule { width: 22px; height: 1px; margin: 1px 0 2px; background: #999; flex: none; }

.viewport { flex: 1; min-width: 0; display: grid; grid-template: 1fr 17px / 1fr 17px; }
.canvas { min-height: 0; overflow: hidden; display: flex; justify-content: center; background: #fff; }
.paper { width: 100%; max-width: 1162px; border: 1px solid #bbb; border-bottom: 0; }
.drawing { display: block; width: 100%; height: auto; }
.vscroll { display: flex; flex-direction: column; align-items: center; justify-content: space-between; padding: 7px 0; border-left: 1px solid #e4e4e4; }
.vscroll svg { width: 8px; height: 4px; }
.hscroll { display: flex; align-items: center; justify-content: space-between; padding: 0 7px; background: #ececec; }
.hscroll svg { width: 4px; height: 8px; }

.status { display: grid; grid-template-columns: 198px 1fr 303px 64px; column-gap: 2px; align-items: center; height: 31px; background: #f0f0f0; border-top: 1px solid #fff; }
.cell { height: 20px; border: 1px solid; border-color: #aaa #fff #fff #aaa; }
.logo { width: 64px; height: 28px; align-self: end; }
.logo-a, .logo-b { font: 700 10px "DejaVu Sans", sans-serif; fill: #fff; }
.logo-b { fill: #000; font-style: oblique; font-size: 11px; }
```
